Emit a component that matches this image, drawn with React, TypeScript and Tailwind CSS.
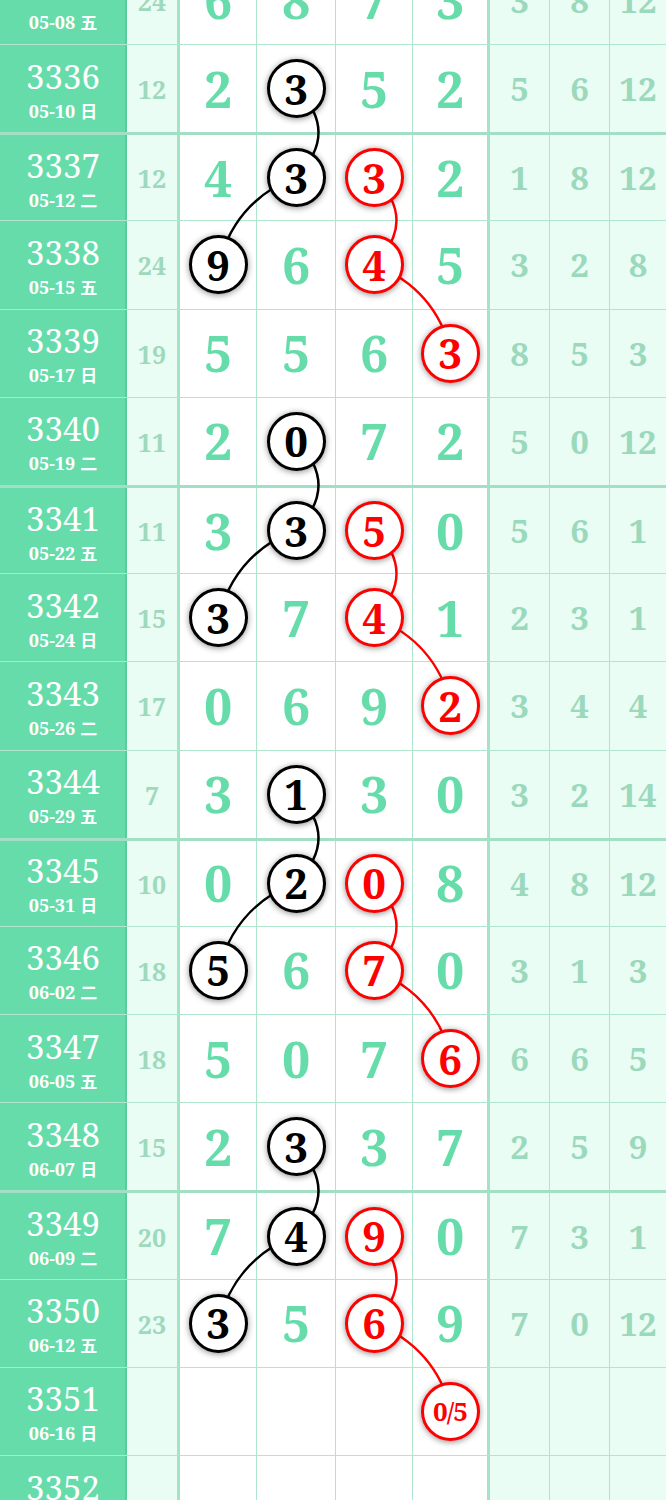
import React from "react";

const H = 88.2;
const COLX = [218.5, 296.5, 374.5, 451.5];

const SERIF = "font-['Noto_Serif','DejaVu_Serif_Condensed','DejaVu_Serif',serif]";

type RowData = {
  id: string;
  date: string;
  sum: string;
  digits: string;
  right: string;
};

const rows: RowData[] = [
  { id: "3335", date: "05-08 五", sum: "24", digits: "6 8 7 3", right: "3 8 12" },
  { id: "3336", date: "05-10 日", sum: "12", digits: "2 3b 5 2", right: "5 6 12" },
  { id: "3337", date: "05-12 二", sum: "12", digits: "4 3b 3r 2", right: "1 8 12" },
  { id: "3338", date: "05-15 五", sum: "24", digits: "9b 6 4r 5", right: "3 2 8" },
  { id: "3339", date: "05-17 日", sum: "19", digits: "5 5 6 3r", right: "8 5 3" },
  { id: "3340", date: "05-19 二", sum: "11", digits: "2 0b 7 2", right: "5 0 12" },
  { id: "3341", date: "05-22 五", sum: "11", digits: "3 3b 5r 0", right: "5 6 1" },
  { id: "3342", date: "05-24 日", sum: "15", digits: "3b 7 4r 1", right: "2 3 1" },
  { id: "3343", date: "05-26 二", sum: "17", digits: "0 6 9 2r", right: "3 4 4" },
  { id: "3344", date: "05-29 五", sum: "7", digits: "3 1b 3 0", right: "3 2 14" },
  { id: "3345", date: "05-31 日", sum: "10", digits: "0 2b 0r 8", right: "4 8 12" },
  { id: "3346", date: "06-02 二", sum: "18", digits: "5b 6 7r 0", right: "3 1 3" },
  { id: "3347", date: "06-05 五", sum: "18", digits: "5 0 7 6r", right: "6 6 5" },
  { id: "3348", date: "06-07 日", sum: "15", digits: "2 3b 3 7", right: "2 5 9" },
  { id: "3349", date: "06-09 二", sum: "20", digits: "7 4b 9r 0", right: "7 3 1" },
  { id: "3350", date: "06-12 五", sum: "23", digits: "3b 5 6r 9", right: "7 0 12" },
  { id: "3351", date: "06-16 日", sum: "", digits: "- - - 0/5r", right: "- - -" },
  { id: "3352", date: "06-19 四", sum: "", digits: "- - - -", right: "- - -" },
];

const groupStarts = new Set(["3337", "3341", "3345", "3349"]);

function Circle({ text, red }: { text: string; red: boolean }) {
  const small = text.length > 1;
  return (
    <div
      className={
        "relative z-20 flex h-[59px] w-[59px] items-center justify-center rounded-full border-[3px] bg-white font-bold leading-none shadow-[0_1px_6px_rgba(0,0,0,0.45)] " +
        SERIF +
        " " +
        (red ? "border-[#ff0000] text-[#ff0000] " : "border-black text-black ") +
        (small ? "text-[26px] tracking-[-1px]" : "text-[42px]")
      }
    >
      {text}
    </div>
  );
}

function DigitCell({ token, last }: { token: string; last: boolean }) {
  let content: React.ReactNode = null;
  if (token !== "-") {
    const m = token.match(/^(.*?)([br])?$/);
    const val = m ? m[1] : token;
    const mark = m ? m[2] : undefined;
    if (mark) {
      content = <Circle text={val} red={mark === "r"} />;
    } else {
      content = (
        <span className={SERIF + " text-[50px] font-bold leading-none text-[#66dcaa]"}>{val}</span>
      );
    }
  }
  return (
    <div
      className={
        "flex items-center justify-center bg-white " +
        (last ? "border-r-[3px] border-[#a6e2c8]" : "border-r border-[#ade6cd]")
      }
    >
      {content}
    </div>
  );
}

function Row({ r }: { r: RowData }) {
  const thick = groupStarts.has(r.id);
  const digits = r.digits.split(" ");
  const right = r.right.split(" ");
  const [d, w] = r.date.split(" ");
  return (
    <div
      className={
        "grid h-[88.2px] grid-cols-[127px_53px_77px_79px_77px_77px_60px_60px_56px] " +
        (thick ? "border-t-[3px] border-[#a3dfc4]" : "border-t-[1.5px] border-[#b0e6ce]")
      }
    >
      <div className="flex flex-col items-center justify-center border-r-2 border-[#5ccb9c] bg-[#66dcaa] pl-[1px] pt-[3px] text-white">
        <div className={SERIF + " text-[33px] leading-[32px]"}>{r.id}</div>
        <div className="mt-[9px] flex items-center gap-[5px] leading-[18px]">
          <span className={SERIF + " text-[18px] font-bold leading-[18px]"}>{d}</span>
          <span className="font-['Noto_Sans_CJK_SC',sans-serif] text-[17px] font-bold leading-[18px]">{w}</span>
        </div>
      </div>
      <div className="flex items-center justify-center border-r-[3px] border-[#a6e2c8] bg-[#eafdf4] pt-[2px]">
        <span className={SERIF + " text-[25px] font-bold leading-none text-[#9ed9be]"}>{r.sum}</span>
      </div>
      {digits.map((t, i) => (
        <DigitCell key={i} token={t} last={i === 3} />
      ))}
      {right.map((t, i) => (
        <div
          key={i}
          className={
            "flex items-center justify-center bg-[#eafdf4] " + (i < 2 ? "border-r border-[#ade6cd]" : "")
          }
        >
          {t !== "-" && (
            <span className={SERIF + " text-[33px] font-bold leading-none text-[#9bd9bc]"}>{t}</span>
          )}
        </div>
      ))}
    </div>
  );
}

function cy(k: number) {
  return k * H + H / 2;
}

function seg(k1: number, c1: number, k2: number, c2: number) {
  const ax = COLX[c1 - 1];
  const ay = cy(k1);
  const bx = COLX[c2 - 1];
  const by = cy(k2);
  const mx = (ax + bx) / 2;
  const my = (ay + by) / 2;
  let cx: number;
  let cyy: number;
  if (c1 === c2) {
    cx = mx + 44;
    cyy = my;
  } else {
    const dx = bx - ax;
    const dy = by - ay;
    const len = Math.hypot(dx, dy);
    const ux = dx / len;
    const uy = dy / len;
    let px = uy;
    let py = -ux;
    if (py > 0) {
      px = -px;
      py = -py;
    }
    cx = mx + px * 30;
    cyy = my + py * 30;
  }
  return `M ${ax} ${ay} Q ${cx} ${cyy} ${bx} ${by}`;
}

export default function App() {
  const groups = [1, 5, 9, 13];
  return (
    <div className="h-[1500px] w-[666px] overflow-hidden bg-white">
      <div className="relative mt-[-44.2px]">
        <svg
          className="pointer-events-none absolute left-0 top-0 z-10"
          width={666}
          height={rows.length * H}
          viewBox={`0 0 666 ${rows.length * H}`}
        >
          {groups.map((g) => (
            <g key={g} fill="none" strokeWidth={2.4}>
              <path d={seg(g, 2, g + 1, 2)} stroke="#000" />
              <path d={seg(g + 1, 2, g + 2, 1)} stroke="#000" />
              <path d={seg(g + 1, 3, g + 2, 3)} stroke="#ff0000" />
              <path d={seg(g + 2, 3, g + 3, 4)} stroke="#ff0000" />
            </g>
          ))}
        </svg>
        {rows.map((r) => (
          <Row key={r.id} r={r} />
        ))}
      </div>
    </div>
  );
}
